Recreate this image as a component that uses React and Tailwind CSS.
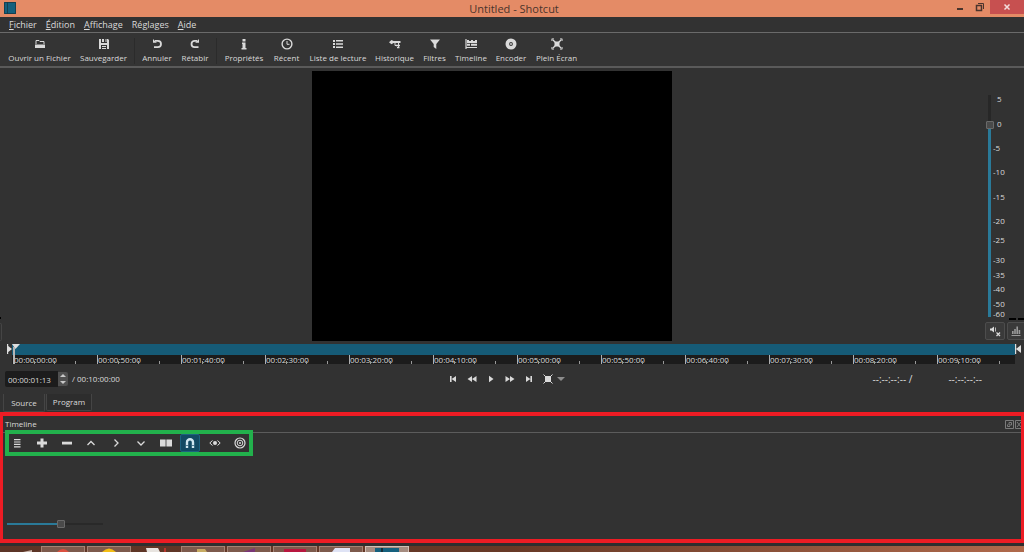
import React, { useState } from 'react';
import clsx from 'clsx';

const menus = [
  { key: 'F', rest: 'ichier' },
  { key: 'É', rest: 'dition' },
  { key: 'A', rest: 'ffichage' },
  { key: '', rest: 'Réglages' },
  { key: 'A', rest: 'ide' },
];

const toolGroups = [
  [
    { label: 'Ouvrir un Fichier', icon: 'open', width: 'w-[71px]' },
    { label: 'Sauvegarder', icon: 'save', width: 'w-[57px]' },
  ],
  [
    { label: 'Annuler', icon: 'undo', width: 'w-[38px]' },
    { label: 'Rétabir', icon: 'redo', width: 'w-[38px]' },
  ],
  [
    { label: 'Propriétés', icon: 'info', width: 'w-[48px]' },
    { label: 'Récent', icon: 'clock', width: 'w-[37px]' },
    { label: 'Liste de lecture', icon: 'list', width: 'w-[66px]' },
    { label: 'Historique', icon: 'history', width: 'w-[47px]' },
    { label: 'Filtres', icon: 'filter', width: 'w-[33px]' },
    { label: 'Timeline', icon: 'timeline', width: 'w-[40px]' },
    { label: 'Encoder', icon: 'disc', width: 'w-[40px]' },
    { label: 'Plein Écran', icon: 'fullscreen', width: 'w-[51px]' },
  ],
];

const levels = [
  { db: '5', height: 'h-[25px]' },
  { db: '0', height: 'h-[24px]' },
  { db: '-5', height: 'h-[24px]' },
  { db: '-10', height: 'h-[25px]' },
  { db: '-15', height: 'h-[24px]' },
  { db: '-20', height: 'h-[19px]' },
  { db: '-25', height: 'h-[20px]' },
  { db: '-30', height: 'h-[15px]' },
  { db: '-35', height: 'h-[14px]' },
  { db: '-40', height: 'h-[15px]' },
  { db: '-50', height: 'h-[10px]' },
  { db: '-60', height: 'h-[10px]' },
];

const rulerMarks = [
  '00:00:00:00', '00:00:50:00', '00:01:40:00', '00:02:30:00',
  '00:03:20:00', '00:04:10:00', '00:05:00:00', '00:05:50:00',
  '00:06:40:00', '00:07:30:00', '00:08:20:00', '00:09:10:00',
];

const transport = [
  { label: 'Début', icon: 'skipBack' },
  { label: 'Retour rapide', icon: 'rewind' },
  { label: 'Lecture', icon: 'play' },
  { label: 'Avance rapide', icon: 'forward' },
  { label: 'Fin', icon: 'skipNext' },
  { label: 'Zoom', icon: 'zoomFit' },
];

const timelineTools = [
  { label: 'Menu', icon: 'menu' },
  { label: 'Ajouter', icon: 'plus' },
  { label: 'Supprimer', icon: 'minus' },
  { label: 'Extraire', icon: 'up' },
  { label: 'Insérer', icon: 'right' },
  { label: 'Écraser', icon: 'down' },
  { label: 'Couper', icon: 'split' },
  { label: 'Magnétisme', icon: 'magnet' },
  { label: 'Scrub', icon: 'eye' },
  { label: 'Ripple', icon: 'target' },
];

const shapes = {
  open: (
    <>
      <path d="M2 6V2.500h3l1 1h4V6" fill="none" stroke="currentColor" />
      <path d="M1 6.500h10v3.500H1z" />
    </>
  ),
  save: (
    <path d="M1 1h2v4h6V1h1l1 1v9H9V7H3v4H1zM4 1h2v3H4zM7.500 1h1v3h-1zM4 8h4v1H4zM4 10h4v1H4z" />
  ),
  undo: (
    <>
      <path d="M4 2.800h2.800a3.200 3.200 0 0 1 0 6.400H3" fill="none" stroke="currentColor" strokeWidth="1.800" />
      <path d="M2 1v3.800h3.800z" />
    </>
  ),
  redo: (
    <>
      <path d="M8 2.800H5.700a3.200 3.200 0 0 0 0 6.400H9.500" fill="none" stroke="currentColor" strokeWidth="1.800" />
      <path d="M10 1v3.800H6.200z" />
    </>
  ),
  info: <path d="M4.500 1h3v2.500h-3zM4 4.500h3.500V10h1v1.500h-5V10h1V6H4z" />,
  clock: (
    <>
      <circle cx="6" cy="6" r="4.900" fill="none" stroke="currentColor" strokeWidth="1.400" />
      <path d="M6 3v3.300h2.500" fill="none" stroke="currentColor" />
    </>
  ),
  list: <path d="M1 2h2v2H1zM4 2h7v1.500H4zM1 5h2v2H1zM4 5.200h7v1.500H4zM1 8h2v2H1zM4 8.400h7v1.500H4z" />,
  history: (
    <>
      <path d="M0 4.200l2.500-2.200 2 1h7v2h-7l-2 1.200z" />
      <path d="M6 4v3.500h2M9.500 4v5" fill="none" stroke="currentColor" />
      <path d="M7 6.800h4v1.400H7zM8 9h2.500v1.300H8z" />
    </>
  ),
  filter: <path d="M1 1.500h10L7.300 6v5L4.700 9V6z" />,
  timeline: (
    <>
      <path d="M1 1v10M1 9.500h11" fill="none" stroke="currentColor" strokeWidth="1.200" />
      <path d="M2 2h2v1h2V2h2v1h2V2h2v3H2zM2 5.700h3v2H2zM6 5.700h6v2H6z" />
    </>
  ),
  disc: (
    <>
      <circle cx="6" cy="6" r="3.700" fill="none" stroke="currentColor" strokeWidth="3.600" />
      <circle cx="6" cy="6" r="0.900" />
    </>
  ),
  fullscreen: (
    <>
      <path d="M3.500 3.500h5v5h-5z" />
      <path d="M1.500 1.500l9 9M10.500 1.500l-9 9" fill="none" stroke="currentColor" strokeWidth="1.300" />
      <path d="M.8 3V.800H3M9 .800h2.200V3M11.200 9v2.200H9M3 11.200H.800V9" fill="none" stroke="currentColor" strokeWidth="0.800" />
    </>
  ),
  skipBack: <path d="M3 3h1.600v6H3zM9 3v6L4.600 6z" />,
  rewind: <path d="M6 3v6L1.500 6zM10.500 3v6L6 6z" />,
  play: <path d="M4 2.800v6.400L8.500 6z" />,
  forward: <path d="M1.500 3v6L6 6zM6 3v6l4.500-3z" />,
  skipNext: <path d="M7.400 3H9v6H7.400zM3 3v6l4.400-3z" />,
  zoomFit: (
    <>
      <path d="M3 3h6v6H3z" />
      <path d="M1.500 1.500L3 3M10.500 1.500L9 3M10.500 10.500L9 9M1.500 10.500L3 9" fill="none" stroke="currentColor" />
    </>
  ),
  menu: <path d="M3 2h6.500v1.200H3zM3 4.400h6.500v1.200H3zM3 6.800h6.500V8H3zM3 9.200h6.500v1.200H3z" />,
  plus: <path d="M4.500 1.500h3v3h3.500v3H7.500v3h-3v-3H1v-3h3.500z" />,
  minus: <path d="M1 4.700h10v2.800H1z" />,
  up: <path d="M2.500 8L6 4.500 9.500 8" fill="none" stroke="currentColor" strokeWidth="1.300" />,
  right: <path d="M4.500 2.500L8 6l-3.500 3.500" fill="none" stroke="currentColor" strokeWidth="1.300" />,
  down: <path d="M2.500 4.500L6 8l3.500-3.500" fill="none" stroke="currentColor" strokeWidth="1.300" />,
  split: <path d="M0 2.500h5.600v7H0zM6.400 2.500H12v7H6.400z" />,
  magnet: (
    <>
      <path d="M3 11V5.200a3 3 0 0 1 6 0V11" fill="none" stroke="currentColor" strokeWidth="2.400" />
      <path d="M1.800 8.500h2.400M7.800 8.500h2.400" stroke="#15506b" strokeWidth="0.700" />
    </>
  ),
  eye: (
    <>
      <path d="M3.500 3.500L.8 6l2.700 2.500M8.500 3.500L11.200 6 8.500 8.500" fill="none" stroke="currentColor" />
      <circle cx="6" cy="6" r="2" />
    </>
  ),
  target: (
    <>
      <circle cx="6" cy="6" r="5" fill="none" stroke="currentColor" strokeWidth="1.200" />
      <circle cx="6" cy="6" r="2.800" fill="none" stroke="currentColor" />
      <circle cx="6" cy="6" r="1" />
    </>
  ),
  mute: (
    <>
      <path d="M1 3.500h1.500L5 1.500v6L2.500 5.500H1z" />
      <path d="M6.500 2.500v4" stroke="currentColor" strokeWidth="0.800" />
      <path d="M7.500 7.500l3.500 3.500M11 7.500L7.500 11" stroke="currentColor" strokeWidth="1.300" />
    </>
  ),
  meter: <path d="M2 6h1.600v3H2zM4.200 4h1.600v5H4.200zM6.400 1.500H8V9H6.400zM8.600 5h1.600v4H8.600zM1.500 10h9v1h-9z" />,
};

function Icon({ name }) {
  return (
    <svg viewBox="0 0 12 12" className="size-3 shrink-0" fill="currentColor" aria-hidden="true">
      {shapes[name]}
    </svg>
  );
}

function TitleBar() {
  return (
    <header className="flex h-[17px] items-start bg-[#e48b66] text-[#4a342c]">
      <div className="flex flex-1 pl-1 pt-0.5">
        <svg viewBox="0 0 12 12" className="size-3" aria-hidden="true">
          <path d="M0 0h12v12H0z" fill="#15607d" />
          <path d="M3.500 0v12M.5.500h11v11H.5z" fill="none" stroke="#173945" strokeWidth="0.800" />
        </svg>
      </div>
      <h1 className="text-[11px] leading-[17px]">Untitled - Shotcut</h1>
      <div className="flex h-3.5 flex-1 items-center justify-end">
        <button aria-label="Réduire" className="flex h-full w-5 items-center justify-center">
          <svg viewBox="0 0 10 10" className="size-2.5"><path d="M2 6h6v2H2z" fill="currentColor" /></svg>
        </button>
        <button aria-label="Restaurer" className="flex h-full w-5 items-center justify-center">
          <svg viewBox="0 0 10 10" className="size-2.5" fill="none" stroke="currentColor">
            <path d="M1.500 3.500h5v5h-5z" strokeWidth="1.500" />
            <path d="M3 1.500h5.500V7" />
          </svg>
        </button>
        <button aria-label="Fermer" className="flex h-full w-[34px] items-center justify-center bg-[#c75050] text-[#f4dede]">
          <svg viewBox="0 0 10 10" className="size-2.5"><path d="M2.500 2.500l5 5M7.500 2.500l-5 5" stroke="currentColor" strokeWidth="1.500" /></svg>
        </button>
      </div>
    </header>
  );
}

function MenuBar() {
  return (
    <nav className="flex h-4 items-center gap-[9px] border-b border-[#6a6a6a] pl-[9px] text-[9px] leading-3">
      {menus.map((menu) => (
        <button key={menu.key + menu.rest}>
          <span className="underline">{menu.key}</span>
          {menu.rest}
        </button>
      ))}
    </nav>
  );
}

function ToolBar() {
  return (
    <div className="flex h-[35px] items-center border-b-2 border-[#5a5a5a] bg-[#343434] pt-0.5 pl-1">
      {toolGroups.map((group, i) => (
        <div key={i} className="flex">
          {i > 0 && <div className="mr-[3px] ml-0.5 w-px bg-[#2b2b2b]" />}
          {group.map((tool) => (
            <button
              key={tool.label}
              className={clsx('flex flex-col items-center gap-0.5 text-[8px] leading-3 whitespace-nowrap', tool.width)}
            >
              <Icon name={tool.icon} />
              {tool.label}
            </button>
          ))}
        </div>
      ))}
    </div>
  );
}

function VolumePanel() {
  const [volume, setVolume] = useState(88);

  return (
    <aside className="flex w-10 flex-col overflow-hidden pt-[25px]">
      <div className="flex h-[225px] gap-0.5 pl-1">
        <input
          type="range"
          aria-label="Volume"
          value={volume}
          onChange={(e) => setVolume(Number(e.target.value))}
          style={{ backgroundImage: `linear-gradient(to top, #2a7a99 ${volume}%, #272727 ${volume}%)` }}
          className="mx-0.5 mt-0.5 h-[222px] w-[3px] appearance-none [direction:rtl] [writing-mode:vertical-lr] [&::-webkit-slider-thumb]:h-2 [&::-webkit-slider-thumb]:w-2 [&::-webkit-slider-thumb]:appearance-none [&::-webkit-slider-thumb]:rounded-[1px] [&::-webkit-slider-thumb]:border [&::-webkit-slider-thumb]:border-[#6a6a6a] [&::-webkit-slider-thumb]:bg-[#4a4a4a]"
        />
        <ul className="w-4 pt-px text-[8px] leading-[10px]">
          {levels.map((level) => (
            <li key={level.db} className={clsx(level.height, level.db.startsWith('-') ? 'pl-0' : 'pl-1')}>
              {level.db}
            </li>
          ))}
        </ul>
      </div>
      <div className="flex h-1 justify-end gap-0.5">
        <div className="h-0.5 w-[7px] bg-black" />
        <div className="h-0.5 w-1.5 bg-black" />
      </div>
      <div className="flex gap-0.5 pl-px">
        <button aria-label="Muet" className="flex h-[18px] w-5 shrink-0 items-center justify-center rounded-[2px] border border-[#4d4d4d] bg-[#3a3a3a]">
          <Icon name="mute" />
        </button>
        <button aria-label="Vumètre" className="flex h-[18px] w-5 shrink-0 items-center rounded-[2px] border border-[#4d4d4d] bg-[#3a3a3a] pl-0.5 text-[#9a9a9a]">
          <Icon name="meter" />
        </button>
      </div>
    </aside>
  );
}

function Scrubber() {
  return (
    <div className="flex">
      <svg viewBox="0 0 6 12" className="ml-1.5 h-3 w-1.5" fill="#dedede" aria-hidden="true">
        <path d="M1 0h1.200v10H1zM1 1l5 4-5 4z" />
      </svg>
      <div className="relative h-5 flex-1 overflow-hidden bg-[#1c1c1c]">
        <div className="h-[11px] bg-[#165b77]" />
        <div className="flex h-[9px] pl-px">
          {rulerMarks.map((mark) => (
            <div key={mark} className="flex w-[84px] shrink-0 items-end border-l border-[#b0b0b0]">
              <div className="w-[20px] whitespace-nowrap text-[8px] leading-[9px]">{mark}</div>
              <div className="h-[3px] w-[21px] border-x border-[#9a9a9a]" />
              <div className="h-[3px] w-[21px] border-r border-[#9a9a9a]" />
            </div>
          ))}
        </div>
        <svg viewBox="0 0 8 20" className="absolute top-0 left-0 h-5 w-2" aria-hidden="true">
          <path d="M0 0h8L3.500 5z" fill="#dedede" />
          <path d="M1 3h2v17H1z" fill="#b5b5b5" />
        </svg>
      </div>
      <svg viewBox="0 0 8 12" className="mr-px h-3 w-2" fill="#dedede" aria-hidden="true">
        <path d="M0 0h1.200v10H0zM6 1v8L1 5z" />
      </svg>
    </div>
  );
}

function Transport() {
  return (
    <div className="flex h-[30px] items-center pl-[5px] text-[8px]">
      <div className="flex flex-1 items-center">
        <input
          aria-label="Position"
          defaultValue="00:00:01:13"
          className="h-4 w-[53px] rounded-l-[2px] bg-[#1c1c1c] pl-[3px]"
        />
        <div className="flex h-3.5 w-2.5 flex-col items-center justify-between rounded-r-[2px] bg-[#505050] py-0.5">
          <button aria-label="Plus" className="block"><svg viewBox="0 0 6 3" className="h-[3px] w-1.5"><path d="M0 3h6L3 0z" fill="#c8c8c8" /></svg></button>
          <button aria-label="Moins" className="block"><svg viewBox="0 0 6 3" className="h-[3px] w-1.5"><path d="M0 0h6L3 3z" fill="#c8c8c8" /></svg></button>
        </div>
        <span className="ml-1">/ 00:10:00:00</span>
      </div>
      <div className="flex items-center gap-[7px] pl-6">
        {transport.map((item) => (
          <button key={item.icon} aria-label={item.label} className="block"><Icon name={item.icon} /></button>
        ))}
        <button aria-label="Options de zoom" className="-ml-1">
          <svg viewBox="0 0 8 4" className="h-1 w-2"><path d="M0 0h8L4 4z" fill="#8c8c8c" /></svg>
        </button>
      </div>
      <div className="flex flex-1 justify-end gap-9 pr-[42px] text-[10px]">
        <span>--:--:--:-- /</span>
        <span>--:--:--:--</span>
      </div>
    </div>
  );
}

function PlayerTabs() {
  return (
    <div role="tablist" className="flex h-[18px] items-start gap-px pl-[3px] text-[8px]">
      <button role="tab" aria-selected="true" className="h-[18px] w-[42px] rounded-b-[2px] border border-t-0 border-[#454545]">
        Source
      </button>
      <button role="tab" aria-selected="false" className="h-[17px] w-[46px] rounded-b-[2px] border border-t-0 border-[#454545] bg-[#2d2d2d]">
        Program
      </button>
    </div>
  );
}

function TimelineDock() {
  const [snap, setSnap] = useState(true);
  const [zoom, setZoom] = useState(57);

  return (
    <section className="flex flex-1 flex-col border-x-[3px] border-y-4 border-[#ed1c24]">
      <div className="flex h-[17px] items-center justify-between border-b border-[#5c5c5c] pl-0.5">
        <h2 className="text-[8px]">Timeline</h2>
        <div className="flex gap-px text-[#7a7a7a]">
          <button aria-label="Détacher">
            <svg viewBox="0 0 9 9" className="size-[9px]" fill="none" stroke="currentColor"><path d="M.5.500h8v8h-8zM4 2.500h2.500V5H4zM2.500 4.500v2H5" /></svg>
          </button>
          <button aria-label="Fermer la timeline">
            <svg viewBox="0 0 6 9" className="h-[9px] w-1.5" fill="none" stroke="currentColor"><path d="M6 .500H.5v8H6M2 2l4 5M6 2L2 7" /></svg>
          </button>
        </div>
      </div>
      <div className="-mt-[3px] ml-0.5 flex h-[26px] w-[248px] items-center justify-between border-4 border-[#22b14c] bg-[#323232] pr-[3px] pl-0.5">
        {timelineTools.map((tool) => (
          <button
            key={tool.icon}
            aria-label={tool.label}
            onClick={tool.icon === 'magnet' ? () => setSnap(!snap) : undefined}
            className={clsx(
              'flex h-[18px] items-center justify-center',
              tool.icon === 'magnet' ? '-mx-1 w-5 rounded-[2px] border' : 'w-3',
              tool.icon === 'magnet' && (snap ? 'border-[#1d6280] bg-[#124a63] text-[#cfe6ef]' : 'border-transparent'),
            )}
          >
            <Icon name={tool.icon} />
          </button>
        ))}
      </div>
      <div className="flex flex-1 items-end pb-[14px] pl-1">
        <input
          type="range"
          aria-label="Zoom de la timeline"
          value={zoom}
          onChange={(e) => setZoom(Number(e.target.value))}
          style={{ backgroundImage: `linear-gradient(to right, #2a7a99 ${zoom}%, #292929 ${zoom}%)` }}
          className="h-0.5 w-24 appearance-none [&::-webkit-slider-thumb]:h-2 [&::-webkit-slider-thumb]:w-2 [&::-webkit-slider-thumb]:appearance-none [&::-webkit-slider-thumb]:rounded-[1px] [&::-webkit-slider-thumb]:border [&::-webkit-slider-thumb]:border-[#6a6a6a] [&::-webkit-slider-thumb]:bg-[#4a4a4a]"
        />
      </div>
    </section>
  );
}

function TaskBar() {
  const slot = 'flex h-1.5 w-11 items-end justify-center overflow-hidden border border-b-0 border-[#a58273] bg-[#7d5a4c]';

  return (
    <footer className="flex h-1.5 gap-0.5 overflow-hidden bg-linear-to-r from-[#5b3426] via-[#673926] to-[#b06a4c] pl-[19px]">
      <svg viewBox="0 0 20 6" className="h-1.5 w-5"><path d="M4 6l9-2v2z" fill="#c9b5ab" /></svg>
      <div className={slot}><svg viewBox="0 0 16 4" className="h-1 w-4"><path d="M2 4q6-6 12 0z" fill="#db5040" /></svg></div>
      <div className={slot}><svg viewBox="0 0 16 4" className="h-1 w-4"><path d="M1 4q7-7 14 0z" fill="#f3bd13" /></svg></div>
      <div className="flex h-1.5 w-[46px] items-end justify-center">
        <svg viewBox="0 0 24 4" className="h-1 w-6"><path d="M2 0h12l2 4H3z" fill="#e8e4e0" /><path d="M20 0h2v4h-2z" fill="#b5362e" /></svg>
      </div>
      <div className={slot}><svg viewBox="0 0 16 4" className="h-1 w-4"><path d="M2 1h8l2 3H2z" fill="#c7ab62" /></svg></div>
      <div className={slot}><svg viewBox="0 0 16 4" className="h-1 w-4"><path d="M2 4l12-4v4z" fill="#7a3577" /></svg></div>
      <div className={slot}><svg viewBox="0 0 24 4" className="h-1 w-6"><path d="M1 1h22v3H1z" fill="#b8173f" /></svg></div>
      <div className={slot}><svg viewBox="0 0 18 4" className="h-1 w-[18px]"><path d="M3 0h15v4H0z" fill="#dfe3f5" /></svg></div>
      <div className="flex h-1.5 w-11 items-end justify-center border border-b-0 border-[#d2bfb5] bg-[#a58c80]">
        <svg viewBox="0 0 24 4" className="h-1 w-6"><path d="M0 0h24v4H0z" fill="#15607d" /><path d="M6 0h2v4H6z" fill="#16303a" /></svg>
      </div>
    </footer>
  );
}

export default function App() {
  return (
    <div className="flex min-h-screen flex-col bg-[#323232] font-['Open_Sans','Noto_Sans',sans-serif] text-[#dadada]">
      <TitleBar />
      <MenuBar />
      <ToolBar />
      <main className="flex min-h-[276px]">
        {/* edge of the collapsed left dock */}
        <div className="-mr-0.5 flex w-0.5 flex-col gap-1 pt-[249px]">
          <div className="h-0.5 w-px bg-black" />
          <div className="h-[18px] rounded-r-[2px] border border-l-0 border-[#454545]" />
        </div>
        <div className="flex flex-1 justify-center pt-[3px]">
          <div className="h-[270px] w-[360px] bg-black" />
        </div>
        <VolumePanel />
      </main>
      <Scrubber />
      <Transport />
      <PlayerTabs />
      <TimelineDock />
      <div className="h-[3px] bg-[#2e2e2e]" />
      <TaskBar />
    </div>
  );
}
